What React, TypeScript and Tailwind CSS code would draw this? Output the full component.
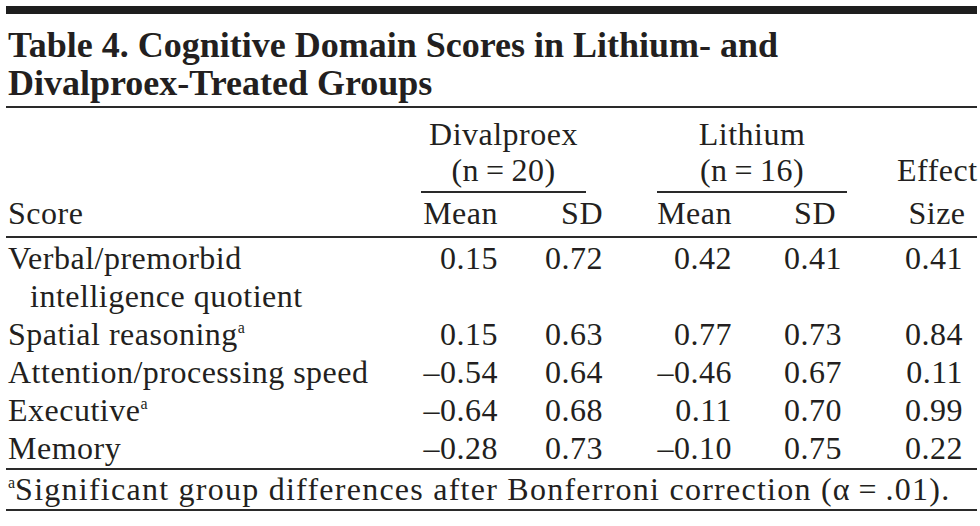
const rows = [
  { label: "Verbal/premorbid", cont: "intelligence quotient", sup: false, v: ["0.15", "0.72", "0.42", "0.41", "0.41"] },
  { label: "Spatial reasoning", sup: true, v: ["0.15", "0.63", "0.77", "0.73", "0.84"] },
  { label: "Attention/processing speed", sup: false, v: ["–0.54", "0.64", "–0.46", "0.67", "0.11"] },
  { label: "Executive", sup: true, v: ["–0.64", "0.68", "0.11", "0.70", "0.99"] },
  { label: "Memory", sup: false, v: ["–0.28", "0.73", "–0.10", "0.75", "0.22"] },
];

// right edges land at 498, 603, 732, 842, 963
const colW = ["w-[104px]", "w-[105px]", "w-[129px]", "w-[110px]", "w-[121px]"];

function Sup() {
  return <span className="relative -top-[12px] text-[16px] leading-none tracking-normal">a</span>;
}

export default function App() {
  return (
    <div className="w-[980px] h-[526px] bg-white text-[#231f20] font-['Liberation_Serif',serif] overflow-hidden">
      <div className="ml-[6px] w-[971px] pt-[6px]">
        <div className="h-[8px] bg-[#1e1e1e]" />

        {/* Title */}
        <div className="pl-[2px] pt-[12px] pb-[4px] text-[36px] leading-[38px] font-bold whitespace-nowrap">
          <div>Table 4. Cognitive Domain Scores in Lithium- and</div>
          <div>Divalproex-Treated Groups</div>
        </div>
        <div className="h-[2px] bg-[#2a2a2a]" />

        {/* Header */}
        <div className="text-[32px] leading-[36px] tracking-[0.5px] whitespace-nowrap">
          <div className="flex pt-[8px]">
            <div className="w-[415px]" />
            <div className="w-[165px] text-center border-b-2 border-[#2a2a2a] pb-[3px]">
              <div>Divalproex</div>
              <div>(n{"\u2009=\u2009"}20)</div>
            </div>
            <div className="w-[71px]" />
            <div className="w-[190px] text-center border-b-2 border-[#2a2a2a] pb-[3px]">
              <div>Lithium</div>
              <div>(n{"\u2009=\u2009"}16)</div>
            </div>
            <div className="ml-[50px] w-[80px] pt-[36px] text-center">Effect</div>
          </div>
          <div className="flex pt-[2px] pb-[5px]">
            <div className="w-[388px] pl-[2px]">Score</div>
            <div className={`${colW[0]} text-right`}>Mean</div>
            <div className={`${colW[1]} text-right`}>SD</div>
            <div className={`${colW[2]} text-right`}>Mean</div>
            <div className={`${colW[3]} text-right pr-[6px]`}>SD</div>
            <div className="w-[135px] pl-[55px] text-center">Size</div>
          </div>
        </div>
        <div className="h-[2px] bg-[#2a2a2a]" />

        {/* Body */}
        <div className="text-[32px] leading-[38px] tracking-[0.5px] pt-[1px] pb-[1px] whitespace-nowrap">
          {rows.map((r) => (
            <div key={r.label}>
              <div className="flex">
                <div className="w-[388px] pl-[2px]">
                  {r.label}
                  {r.sup && <Sup />}
                </div>
                {r.v.map((x, i) => (
                  <div key={i} className={`${colW[i]} text-right`}>
                    {x}
                  </div>
                ))}
              </div>
              {r.cont && <div className="pl-[24px]">{r.cont}</div>}
            </div>
          ))}
        </div>
        <div className="h-[2px] bg-[#2a2a2a]" />

        {/* Footnote */}
        <div className="text-[32px] leading-[36px] tracking-[1.25px] pl-[2px] pt-[1px] pb-[2px] whitespace-nowrap">
          <Sup />Significant group differences after Bonferroni correction (α{"\u2009=\u2009"}.01).
        </div>
        <div className="h-[2px] bg-[#2a2a2a]" />
      </div>
    </div>
  );
}
